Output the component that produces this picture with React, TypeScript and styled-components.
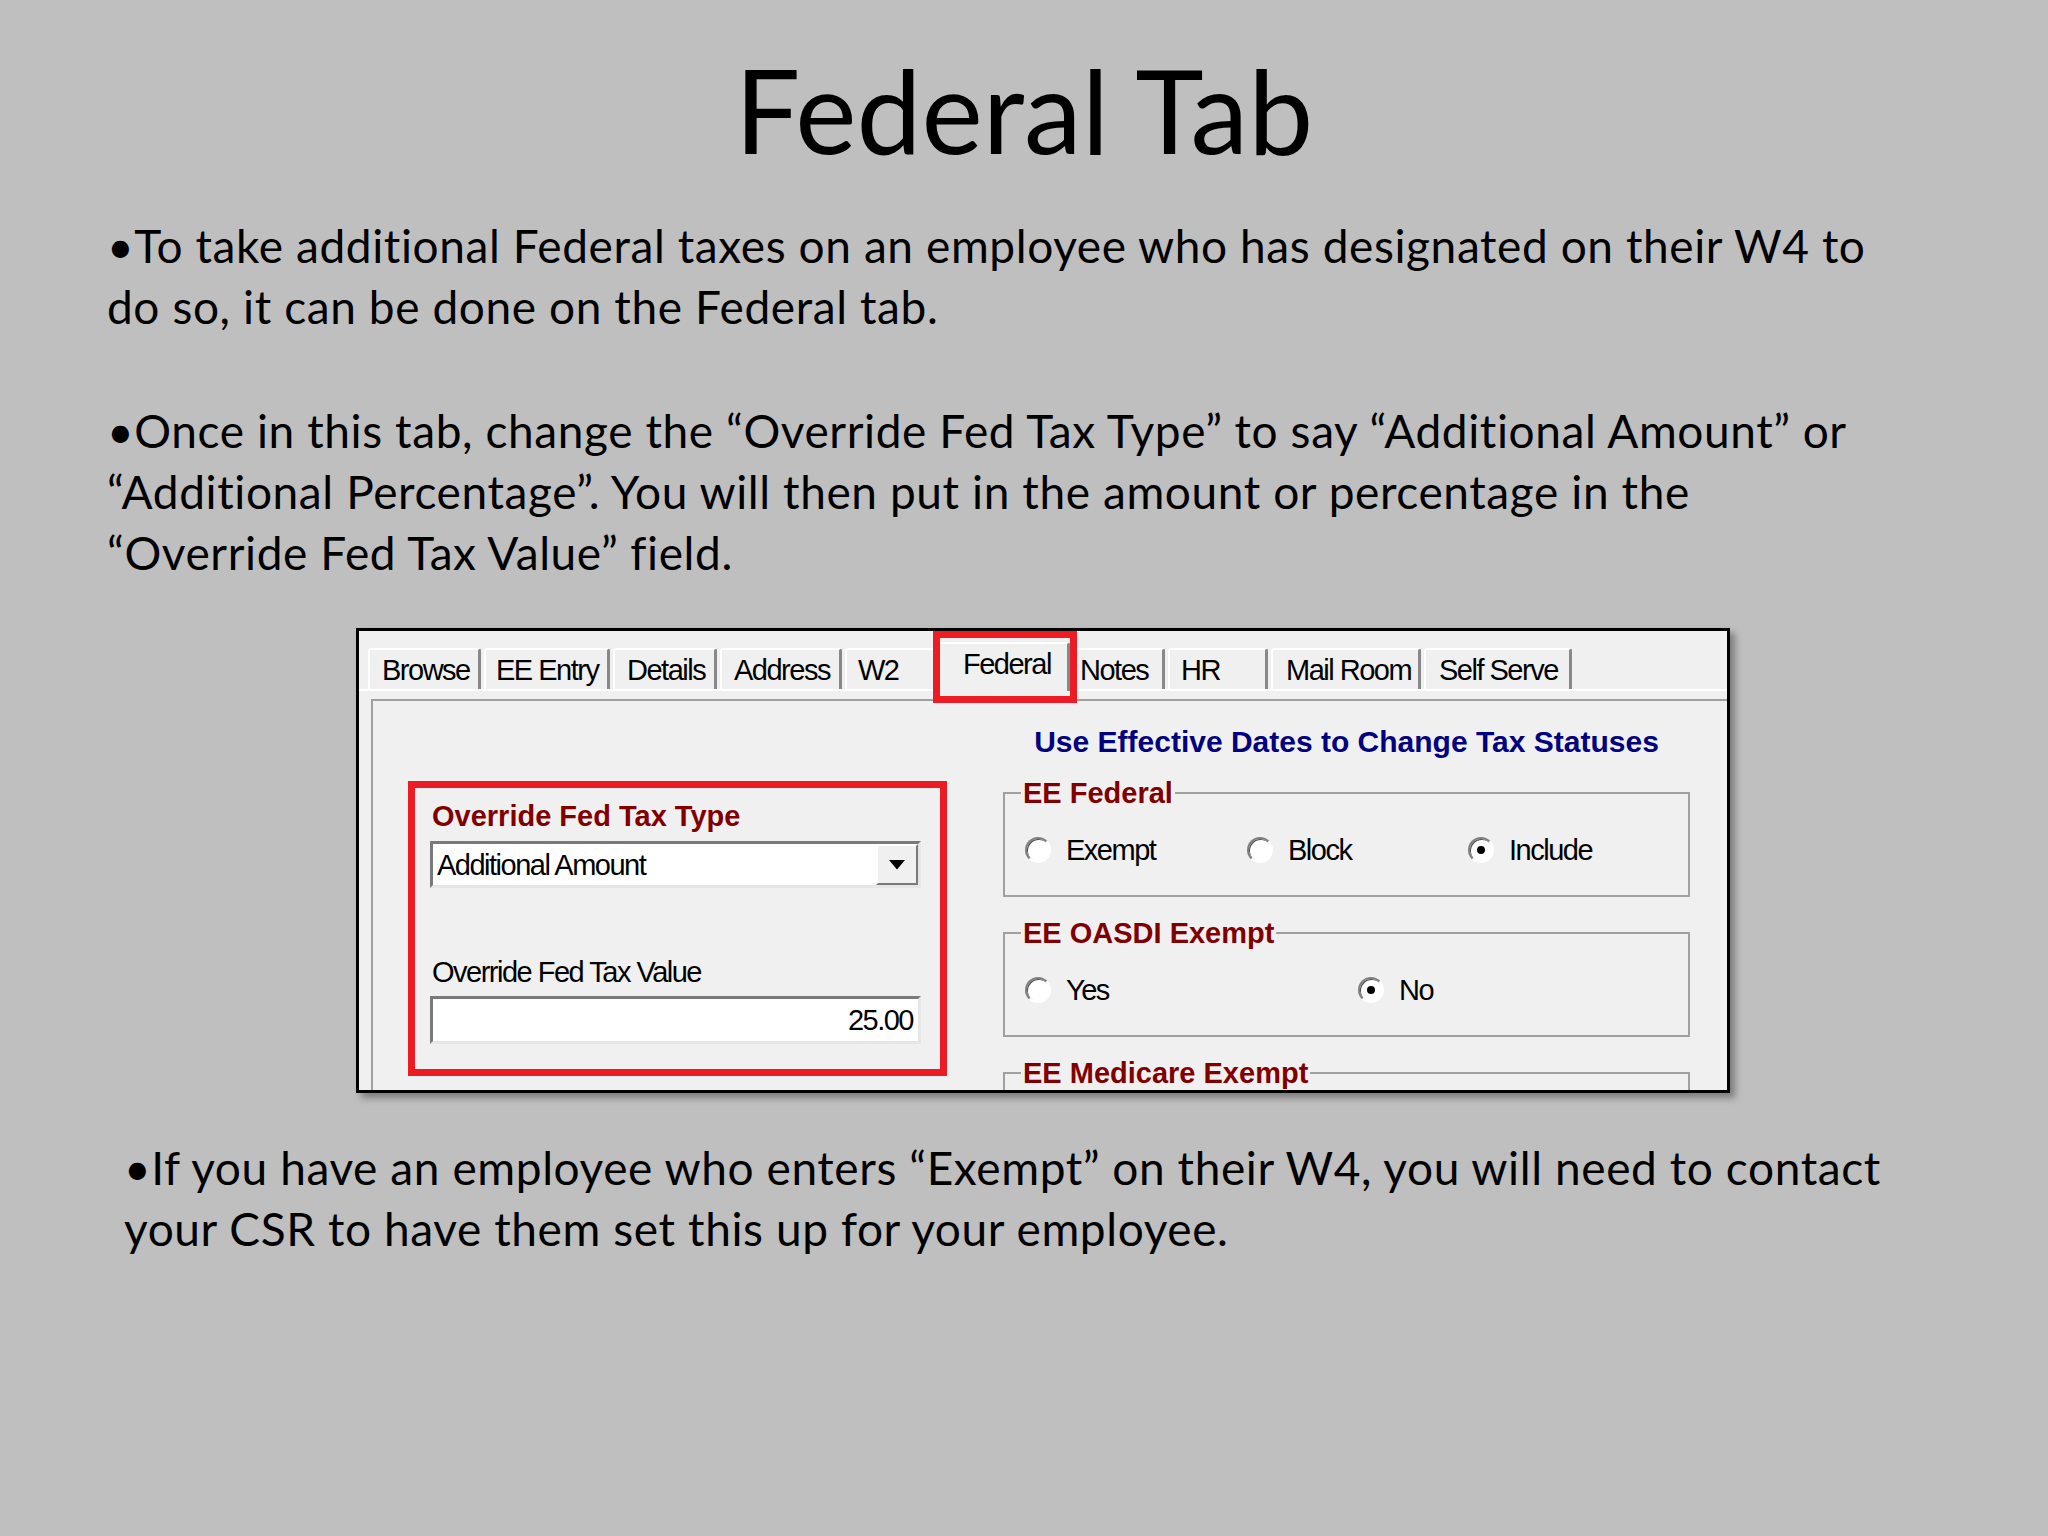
import styled, { createGlobalStyle } from 'styled-components';

const GlobalStyle = createGlobalStyle`
  html, body {
    margin: 0;
    padding: 0;
    background: #bfbfbf;
  }
`;

const uiFont = `'Liberation Sans', Arial, sans-serif`;

const Slide = styled.main`
  width: 2048px;
  height: 1536px;
  background: #bfbfbf;
  font-family: Lato, 'Open Sans', sans-serif;
  color: #000;
  display: flex;
  flex-direction: column;
  overflow: hidden;
`;

const Title = styled.h1`
  margin: 0;
  padding-top: 41px;
  font-size: 116px;
  line-height: 137px;
  font-weight: 400;
  text-align: center;
`;

const Body = styled.section`
  margin-top: 37px;
  padding-left: 107px;
`;

const Bullet = styled.p<{ $gap?: number; $indent?: number }>`
  margin: ${(p) => p.$gap ?? 0}px 0 0 ${(p) => p.$indent ?? 0}px;
  font-size: 46px;
  line-height: 61px;
  letter-spacing: 0.6px;
  white-space: nowrap;
`;

const Window = styled.div`
  margin: 45px 0 0 356px;
  width: 1374px;
  height: 465px;
  box-sizing: border-box;
  border: 3px solid #000;
  background: #f0f0f0;
  box-shadow: 5px 5px 7px rgba(0, 0, 0, 0.35);
  overflow: hidden;
  font-family: ${uiFont};
  font-size: 29px;
  line-height: 30px;
  letter-spacing: -1.5px;
  color: #000;
`;

const TabStrip = styled.div`
  display: flex;
  align-items: flex-end;
  height: 58px;
  padding-left: 9px;
  border-bottom: 2px solid #fff;
`;

const Tab = styled.div<{ $w: number; $pad: number; $gap: number; $active?: boolean }>`
  position: relative;
  box-sizing: border-box;
  flex: none;
  width: ${(p) => p.$w}px;
  height: ${(p) => (p.$active ? 49 : 41)}px;
  margin-left: ${(p) => p.$gap}px;
  margin-bottom: ${(p) => (p.$active ? -2 : 0)}px;
  padding: 5px 0 0 ${(p) => p.$pad - 2}px;
  border-top: 2px solid #fff;
  border-left: 2px solid #fff;
  border-right: 3px solid #888;
  border-radius: 3px 3px 0 0;
  background: #f0f0f0;
  white-space: nowrap;
`;

const TabHighlight = styled.span`
  position: absolute;
  top: -13px;
  left: -6px;
  right: -10px;
  bottom: -12px;
  border: 7px solid #ed1c24;
  z-index: 2;
`;

const PanelFrame = styled.div`
  padding: 8px 0 0 12px;
`;

const Panel = styled.div`
  display: flex;
  align-items: flex-start;
  height: 600px;
  border-top: 2px solid #a0a0a0;
  border-left: 2px solid #a0a0a0;
`;

const RedBox = styled.div`
  flex: none;
  box-sizing: border-box;
  width: 539px;
  height: 295px;
  margin: 80px 0 0 35px;
  padding: 13px 19px 25px 15px;
  border: 7px solid #ed1c24;
  display: flex;
  flex-direction: column;
`;

const BoldLabel = styled.div`
  padding-left: 2px;
  font-weight: 700;
  letter-spacing: 0;
  color: #800000;
`;

const PlainLabel = styled.div<{ $gap: number }>`
  margin-top: ${(p) => p.$gap}px;
  padding-left: 2px;
`;

const Sunken = styled.div`
  box-sizing: border-box;
  display: flex;
  align-items: center;
  background: #fff;
  border: 3px solid;
  border-color: #7a7a7a #e6e6e6 #e6e6e6 #7a7a7a;
`;

const Select = styled(Sunken)`
  margin-top: 10px;
  height: 47px;
  padding-left: 4px;
`;

const DropButton = styled.span`
  box-sizing: border-box;
  margin-left: auto;
  width: 42px;
  height: 41px;
  display: flex;
  align-items: center;
  justify-content: center;
  background: #f0f0f0;
  border: 2px solid;
  border-color: #fff #7a7a7a #7a7a7a #fff;
`;

const ValueInput = styled(Sunken)`
  margin-top: 9px;
  height: 48px;
  justify-content: flex-end;
  padding-right: 5px;
`;

const RightColumn = styled.div`
  flex: none;
  width: 687px;
  margin: 26px 0 0 56px;
`;

const Notice = styled.div`
  font-weight: 700;
  font-size: 30px;
  letter-spacing: 0;
  color: #000080;
  text-align: center;
`;

const Group = styled.fieldset`
  margin: 21px 0 0;
  padding: 27px 20px 30px;
  min-width: 0;
  border: 2px solid #a0a0a0;
`;

const Legend = styled.legend`
  margin-left: -4px;
  padding: 0 2px;
  font-weight: 700;
  letter-spacing: 0;
  color: #800000;
`;

const RadioRow = styled.div<{ $cols: string }>`
  display: grid;
  grid-template-columns: ${(p) => p.$cols};
  align-items: center;
  height: 30px;
`;

const RadioItem = styled.label`
  display: flex;
  align-items: center;
  gap: 15px;
`;

const RadioCircle = styled.span<{ $checked?: boolean }>`
  flex: none;
  box-sizing: border-box;
  width: 26px;
  height: 26px;
  border-radius: 50%;
  border: 2px solid;
  border-color: #7f7f7f #fff #fff #7f7f7f;
  background: #fff;
  box-shadow: inset 1px 1px 0 #505050;
  display: grid;
  place-items: center;

  &::after {
    content: '';
    display: ${(p) => (p.$checked ? 'block' : 'none')};
    width: 8px;
    height: 8px;
    border-radius: 50%;
    background: #000;
  }
`;

const tabs = [
  { label: 'Browse', w: 113, pad: 14, gap: 0 },
  { label: 'EE Entry', w: 126, pad: 12, gap: 3 },
  { label: 'Details', w: 104, pad: 14, gap: 3 },
  { label: 'Address', w: 122, pad: 14, gap: 3 },
  { label: 'W2', w: 92, pad: 13, gap: 3 },
  { label: 'Federal', w: 133, pad: 26, gap: 0, active: true },
  { label: 'Notes', w: 95, pad: 10, gap: 0 },
  { label: 'HR', w: 100, pad: 13, gap: 3 },
  { label: 'Mail Room', w: 150, pad: 15, gap: 3 },
  { label: 'Self Serve', w: 148, pad: 15, gap: 3 },
];

function Radio({ label, checked }: { label: string; checked?: boolean }) {
  return (
    <RadioItem>
      <RadioCircle $checked={checked} />
      {label}
    </RadioItem>
  );
}

export default function App() {
  return (
    <Slide>
      <GlobalStyle />
      <Title>Federal Tab</Title>
      <Body>
        <Bullet>
          •To take additional Federal taxes on an employee who has designated on their W4 to
          <br />
          do so, it can be done on the Federal tab.
        </Bullet>
        <Bullet $gap={63}>
          •Once in this tab, change the “Override Fed Tax Type” to say “Additional Amount” or
          <br />
          “Additional Percentage”. You will then put in the amount or percentage in the
          <br />
          “Override Fed Tax Value” field.
        </Bullet>
      </Body>

      <Window>
        <TabStrip>
          {tabs.map((t) => (
            <Tab key={t.label} $w={t.w} $pad={t.pad} $gap={t.gap} $active={t.active}>
              {t.label}
              {t.active && <TabHighlight />}
            </Tab>
          ))}
        </TabStrip>
        <PanelFrame>
          <Panel>
            <RedBox>
              <BoldLabel>Override Fed Tax Type</BoldLabel>
              <Select>
                Additional Amount
                <DropButton>
                  <svg width='16' height='10' viewBox='0 0 16 10'>
                    <polygon points='0,0 16,0 8,9.5' fill='#000' />
                  </svg>
                </DropButton>
              </Select>
              <PlainLabel $gap={69}>Override Fed Tax Value</PlainLabel>
              <ValueInput>25.00</ValueInput>
            </RedBox>

            <RightColumn>
              <Notice>Use Effective Dates to Change Tax Statuses</Notice>
              <Group>
                <Legend>EE Federal</Legend>
                <RadioRow $cols='222px 221px auto'>
                  <Radio label='Exempt' />
                  <Radio label='Block' />
                  <Radio label='Include' checked />
                </RadioRow>
              </Group>
              <Group>
                <Legend>EE OASDI Exempt</Legend>
                <RadioRow $cols='333px auto'>
                  <Radio label='Yes' />
                  <Radio label='No' checked />
                </RadioRow>
              </Group>
              <Group>
                <Legend>EE Medicare Exempt</Legend>
              </Group>
            </RightColumn>
          </Panel>
        </PanelFrame>
      </Window>

      <Bullet $gap={44} $indent={124}>
        •If you have an employee who enters “Exempt” on their W4, you will need to contact
        <br />
        your CSR to have them set this up for your employee.
      </Bullet>
    </Slide>
  );
}
